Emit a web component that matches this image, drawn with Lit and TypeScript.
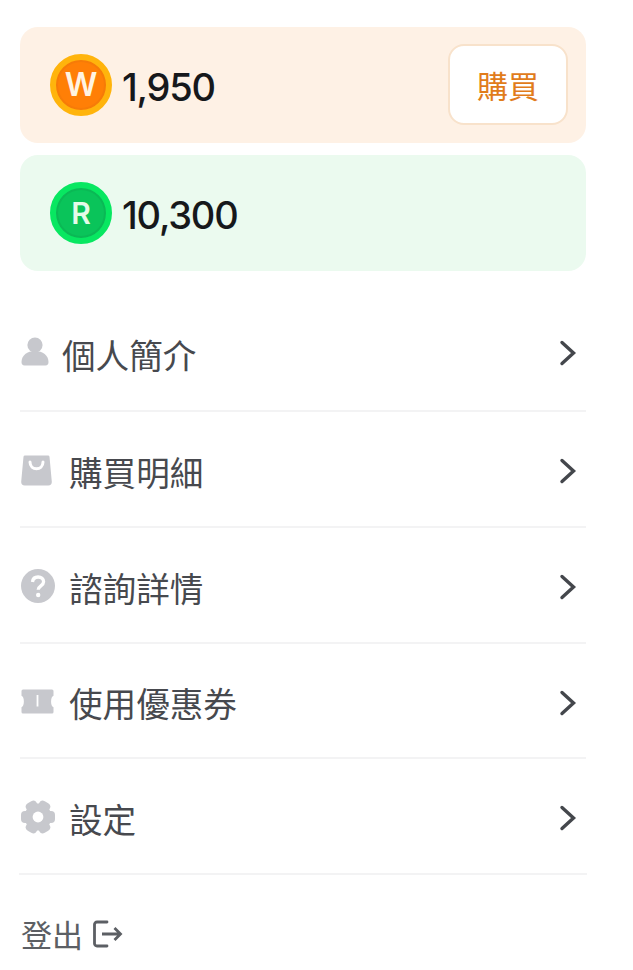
import { LitElement, html, css, svg } from "lit";
import { customElement } from "lit/decorators.js";

const icons = {
  person: svg`<svg class="ic" width="28" height="30" viewBox="0 0 28 30"><circle cx="14" cy="8" r="7.6" fill="#c7c8cd"/><path d="M0.500 25c0-6.500 5.600-11 13.500-11s13.500 4.500 13.500 11c0 2.200-1 3.500-3 3.500H3.500c-2 0-3-1.300-3-3.500z" fill="#c7c8cd"/></svg>`,
  bag: svg`<svg class="ic" width="31" height="31" viewBox="0 0 31 31"><path d="M4 0.500h23a1.500 1.500 0 0 1 1.500 1.300l2.300 25c.2 2.200-1.300 3.700-3.500 3.700H3.700c-2.200 0-3.700-1.500-3.500-3.700l2.300-25A1.500 1.500 0 0 1 4 0.500z" fill="#c7c8cd"/><path d="M9 7c0 9 13 9 13 0" fill="none" stroke="#fff" stroke-width="3" stroke-linecap="round"/></svg>`,
  help: svg`<svg class="ic" width="34" height="34" viewBox="0 0 34 34"><circle cx="17" cy="17" r="17" fill="#c7c8cd"/><path d="M11.500 13c.3-3.200 2.500-5 5.600-5 3.200 0 5.500 1.900 5.500 4.700 0 4.100-5.400 4.100-5.400 8" fill="none" stroke="#fff" stroke-width="3.300"/><circle cx="17.200" cy="26" r="2.200" fill="#fff"/></svg>`,
  ticket: svg`<svg class="ic" width="33" height="25" viewBox="0 0 33 25"><path d="M2 0.500h29a1.500 1.500 0 0 1 1.500 1.500v4.800c-3.200.8-3.200 10.600 0 11.400V23a1.500 1.500 0 0 1-1.500 1.500H2A1.500 1.500 0 0 1 .5 23v-4.800c3.200-.8 3.200-10.600 0-11.400V2A1.500 1.500 0 0 1 2 .5z" fill="#c7c8cd"/><rect x="15.600" y="6" width="1.800" height="11.500" fill="#fff"/></svg>`,
  gear: svg`<svg class="ic" width="34" height="34" viewBox="0 0 34 34"><circle cx="17" cy="17" r="13.500" fill="#c7c8cd"/><g fill="#c7c8cd"><rect x="0" y="11" width="34" height="12" rx="4"/><rect x="0" y="11" width="34" height="12" rx="4" transform="rotate(60 17 17)"/><rect x="0" y="11" width="34" height="12" rx="4" transform="rotate(120 17 17)"/></g><circle cx="17" cy="17" r="5.400" fill="#fff"/></svg>`,
};

const chevron = svg`<svg class="chev" width="18" height="26" viewBox="0 0 18 26"><path d="M3 2.500 14.500 13 3 23.500" fill="none" stroke="#44474c" stroke-width="3.400" stroke-linecap="round" stroke-linejoin="miter"/></svg>`;

const rows = [
  { icon: icons.person, label: "個人簡介", cls: "narrow" },
  { icon: icons.bag, label: "購買明細", cls: "" },
  { icon: icons.help, label: "諮詢詳情", cls: "" },
  { icon: icons.ticket, label: "使用優惠券", cls: "" },
  { icon: icons.gear, label: "設定", cls: "" },
];

@customElement("app-root")
export class AppRoot extends LitElement {
  static styles = css`
    :host { display: block; background: #fff; height: 970px; overflow: hidden; font-family: "Noto Sans CJK TC", "Noto Sans CJK SC", sans-serif; }
    .page { padding: 27px 47px 0 20px; display: flex; flex-direction: column; }
    .card { height: 116px; border-radius: 18px; display: flex; align-items: center; padding: 0 18px 0 30px; box-sizing: border-box; }
    .card + .card { margin-top: 12px; }
    .orange { background: #fef1e5; }
    .green { background: #ebfaef; }
    .coin { width: 62px; height: 62px; border-radius: 50%; box-sizing: border-box; border: 6px solid; display: flex; align-items: center; justify-content: center;
      font-family: Inter, "Liberation Sans", sans-serif; font-weight: 600; font-size: 32px; line-height: 1; color: #fff4e2; flex: none; }
    .coin.w { background: #ff7f06; border-color: #ffb40c; box-shadow: inset 0 0 0 2px #f67b08; }
    .coin.r { background: #0ac45a; border-color: #08e761; box-shadow: inset 0 0 0 2px #0bb855; color: #e4fbe9; font-size: 30px; }
    .num { margin-left: 10px; padding-top: 4px; font-family: Inter, "Liberation Sans", sans-serif; font-size: 38px; font-weight: 500; color: #16181b; letter-spacing: -1.2px; line-height: 1; }
    .buy { margin-left: auto; align-self: flex-start; margin-top: 17px; width: 120px; height: 81px; box-sizing: border-box; border: 2px solid #f8e2cb; border-radius: 16px; background: #fff; color: #e17c1b;
      display: flex; align-items: center; justify-content: center; font-size: 31px; padding: 0; font-family: inherit; }
    .menu { margin-top: 25.6px; display: flex; flex-direction: column; }
    .row { height: 115.7px; box-sizing: border-box; border-bottom: 2px solid #f3f3f4; display: flex; align-items: center; color: #47494e; padding-top: 2px; }
    .row.narrow { padding-top: 0; padding-bottom: 2px; }
    .row:last-child { margin: 0 -1px; padding-left: 1px; padding-right: 1px; }
    .box { width: 49px; flex: none; display: flex; align-items: center; }
    .row.narrow .box { width: 42px; }
    .ic { display: block; flex: none; margin-left: 1px; }
    .label { font-size: 33.6px; line-height: 1; padding-top: 3px; flex: 1; }
    .row.narrow .label { padding-top: 4px; }
    .chev { margin-right: 9px; margin-top: 2px; }
    .logout { margin-top: 43.4px; display: flex; align-items: center; font-size: 31px; line-height: 1; color: #5c5f64; padding-left: 1px; }
    .logout svg { margin-left: 10px; }
  `;

  render() {
    return html`<div class="page">
      <div class="card orange">
        <div class="coin w">W</div><div class="num">1,950</div>
        <button class="buy">購買</button>
      </div>
      <div class="card green">
        <div class="coin r">R</div><div class="num">10,300</div>
      </div>
      <div class="menu">
        ${rows.map((r) => html`<div class="row ${r.cls}"><div class="box">${r.icon}</div><div class="label">${r.label}</div>${chevron}</div>`)}
      </div>
      <div class="logout">登出<svg width="30" height="28" viewBox="0 0 30 28"><path d="M14 2H4a2.500 2.500 0 0 0-2.500 2.500v19A2.500 2.500 0 0 0 4 26h10" fill="none" stroke="#5c5f64" stroke-width="2.800" stroke-linecap="round"/><path d="M9 14h18M21.500 8l6 6-6 6" fill="none" stroke="#5c5f64" stroke-width="2.800"/></svg></div>
    </div>`;
  }
}
